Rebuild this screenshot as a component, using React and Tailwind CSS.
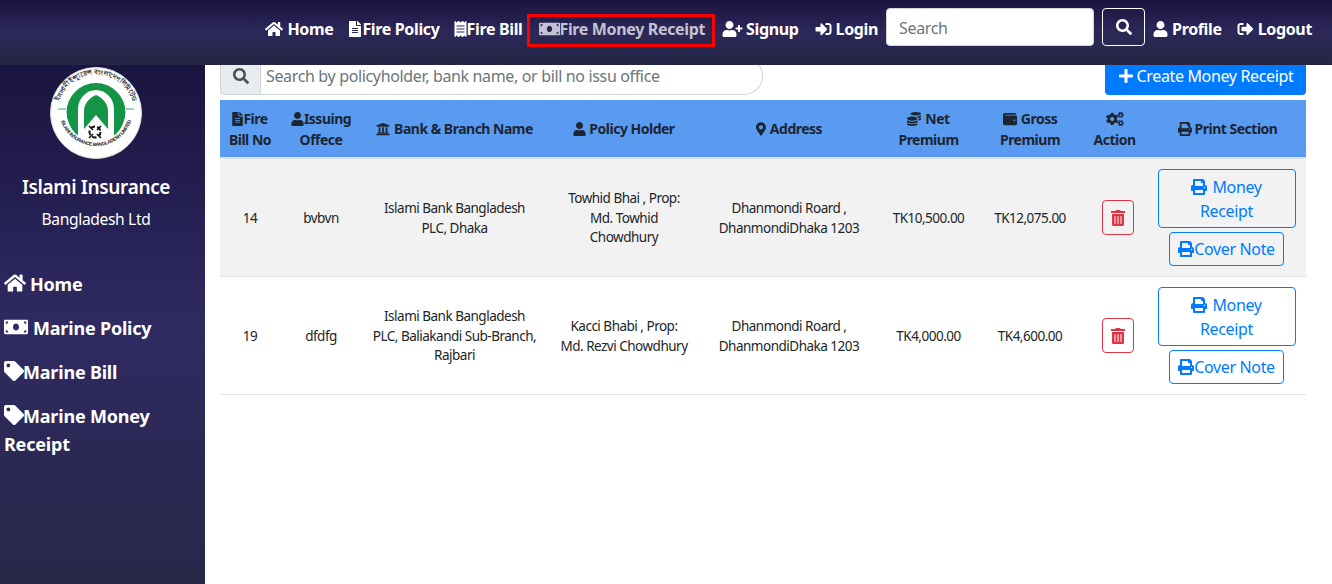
import React from "react";
import {
  FaHome, FaFileAlt, FaReceipt, FaMoneyBill, FaUserPlus, FaSignInAlt, FaSearch, FaUser,
  FaSignOutAlt, FaPlus, FaTag, FaUniversity, FaMapMarkerAlt, FaCoins, FaWallet, FaCogs,
  FaPrint, FaTrashAlt,
} from "react-icons/fa";

function Logo() {
  return (
    <svg viewBox="0 0 92 92" className="w-[92px] h-[92px]">
      <defs>
        <path id="topArc" d="M7.5 46 A38 38 0 0 1 84.5 46" />
        <path id="botArc" d="M9 42 A37 37 0 0 0 83 42" />
      </defs>
      <circle cx="46" cy="46" r="45.5" fill="#fff" stroke="#d8ddd6" strokeWidth="1" />
      <text fontSize="6.6" fill="#2b2b2b" fontFamily="'Noto Sans CJK SC', sans-serif" fontWeight="600">
        <textPath href="#topArc" startOffset="50%" textAnchor="middle">ইসলামী ইন্স্যুরেন্স বাংলাদেশ লিমিটেড</textPath>
      </text>
      <circle cx="46" cy="45.5" r="29.5" fill="#139447" />
      <path d="M28 72 L28 42 C28 32 36 23 46 23 C56 23 64 32 64 42 L64 72 Z" fill="#fff" />
      <path d="M34 62 L34 44 C34 37 39 31 46 28 C53 31 58 37 58 44 L58 62 L46 48 Z" fill="#139447" />
      <path d="M7 42 L16 42 C16 56 24 68 32 72 L60 72 C68 68 76 56 76 42 L85 42 L85 52 C80 72 64 84 46 84 C28 84 12 72 7 52 Z" fill="#fff" />
      <path d="M8 42 L16 42 M76 42 L84 42" stroke="#139447" strokeWidth="0.8" />
      <text fontSize="4.9" fontWeight="700" fill="#222" fontFamily="'Liberation Sans', sans-serif">
        <textPath href="#botArc" startOffset="50%" textAnchor="middle">ISLAMI INSURANCE BANGLADESH LIMITED</textPath>
      </text>
      <circle cx="45" cy="65" r="5.5" fill="none" stroke="#111" strokeWidth="2" strokeDasharray="4.5 2.4" />
      <path d="M39 59 L43 63 M51 59 L47 63 M39 71 L43 67 M51 71 L47 67" stroke="#111" strokeWidth="1.6" />
    </svg>
  );
}

function NavItem({ icon: Icon, children, iconClass, className = "" }) {
  return (
    <a className={"flex items-center h-[38px] mt-[2px] text-white font-bold text-base whitespace-nowrap " + className}>
      <Icon className={"h-4 shrink-0 " + iconClass} />
      {children}
    </a>
  );
}

function SideItem({ icon: Icon, children, iconClass }) {
  return (
    <a className="block px-[4px] py-[8px] text-white font-bold text-lg leading-[28px] tracking-[-0.2px]">
      <Icon className={"inline-block align-[-2px] " + iconClass} />
      {children}
    </a>
  );
}

function Th({ icon: Icon, children, rest, iconClass = "" }) {
  return (
    <th className="px-1 py-[7.5px] text-center align-middle font-bold text-sm leading-[21px] text-[#1c2530] tracking-[-0.5px]">
      <Icon className={"inline-block align-[-2px] " + iconClass} />
      {children}
      {rest && <br />}
      {rest}
    </th>
  );
}

const rows = [
  {
    no: "14",
    office: "bvbvn",
    bank: "Islami Bank Bangladesh PLC, Dhaka",
    holder: ["Towhid Bhai , Prop:", "Md. Towhid", "Chowdhury"],
    addr: "Dhanmondi Roard , DhanmondiDhaka 1203",
    net: "TK10,500.00",
    gross: "TK12,075.00",
    bg: "bg-[#f2f2f2]",
  },
  {
    no: "19",
    office: "dfdfg",
    bank: "Islami Bank Bangladesh PLC, Baliakandi Sub-Branch, Rajbari",
    holder: ["Kacci Bhabi , Prop:", "Md. Rezvi Chowdhury"],
    addr: "Dhanmondi Roard , DhanmondiDhaka 1203",
    net: "TK4,000.00",
    gross: "TK4,600.00",
    bg: "bg-white",
  },
];

export default function App() {
  return (
    <div className="h-[584px] overflow-hidden bg-white font-['Noto_Sans','Open_Sans',sans-serif] tracking-[-0.35px] flex flex-col text-[#212529]">
      <header className="relative z-10 h-[65px] shrink-0 bg-gradient-to-b from-[#1a1440] via-[#2c2858] to-[#252545] flex items-start justify-end pt-[8px] pr-[20px]">
        <NavItem icon={FaHome} iconClass="w-[18px]" className="mr-[16px]"><span className="ml-[4px]">Home</span></NavItem>
        <NavItem icon={FaFileAlt} iconClass="w-[12px]" className="mr-[14px]"><span className="ml-[1px]">Fire Policy</span></NavItem>
        <NavItem icon={FaReceipt} iconClass="w-[13px]" className="mr-[4px]">Fire Bill</NavItem>
        <a className="flex items-center h-[33px] mt-[6px] pb-[3px] pl-[9px] pr-[7px] mr-[7px] border-[3px] border-[#ff0000] text-[#c4c3d2] font-bold text-base whitespace-nowrap">
          <FaMoneyBill className="w-[21px] h-[18px] shrink-0" />
          Fire Money Receipt
        </a>
        <NavItem icon={FaUserPlus} iconClass="w-[21px]" className="mr-[16px]"><span className="ml-[3px]">Signup</span></NavItem>
        <NavItem icon={FaSignInAlt} iconClass="w-[17px]" className="mr-[8px]"><span className="ml-[4px]">Login</span></NavItem>
        <input
          placeholder="Search"
          className="w-[208px] h-[38px] mr-[8px] pt-[2px] rounded-[4px] bg-white border border-[#ced4da] px-3 text-base text-[#495057] placeholder:text-[#6c757d] outline-none"
        />
        <button className="w-[43px] h-[38px] mr-[8px] rounded-[4px] border border-white flex items-center justify-center text-white">
          <FaSearch className="w-4 h-4" />
        </button>
        <NavItem icon={FaUser} iconClass="w-[15px]" className="mr-[15px]"><span className="ml-[4px]">Profile</span></NavItem>
        <NavItem icon={FaSignOutAlt} iconClass="w-[17px]"><span className="ml-[4px]">Logout</span></NavItem>
      </header>

      <div className="flex flex-1 min-h-0">
        <aside className="w-[205px] shrink-0 bg-gradient-to-b from-[#1a1440] via-[#2f2a62] to-[#282648] text-white">
          <div className="pr-[13px]">
            <div className="flex justify-center pt-[2px]"><Logo /></div>
            <div className="mt-[15px] text-center text-[19px] font-semibold leading-[27px]">Islami Insurance</div>
            <div className="mt-[6px] text-center text-[15.6px] leading-[24px]">Bangladesh Ltd</div>
          </div>
          <nav className="mt-[31px]">
            <SideItem icon={FaHome} iconClass="w-[22px] h-5 mr-[4px]">Home</SideItem>
            <SideItem icon={FaMoneyBill} iconClass="w-[24px] h-5 mr-[5px]">Marine Policy</SideItem>
            <SideItem icon={FaTag} iconClass="w-5 h-5 -mr-px">Marine Bill</SideItem>
            <SideItem icon={FaTag} iconClass="w-5 h-5 -mr-px">Marine Money Receipt</SideItem>
          </nav>
        </aside>

        <main className="flex-1 min-w-0 pl-[15px] pr-[26px] -mt-[8px]">
          <div className="flex items-start justify-between h-[43px]">
            <div className="flex w-[543px] h-[38px]">
              <span className="w-[41px] flex items-center justify-center bg-[#e9ecef] border border-[#ced4da] rounded-l-[4px] text-[#495057]">
                <FaSearch className="w-4 h-4" />
              </span>
              <input
                placeholder="Search by policyholder, bank name, or bill no issu office"
                className="flex-1 min-w-0 border border-l-0 border-[#ced4da] rounded-r-[20px] px-[5px] text-base text-[#495057] placeholder:text-[#6c757d] outline-none"
              />
            </div>
            <button className="w-[201px] h-[38px] rounded-[4px] bg-[#007bff] text-white text-base flex items-center justify-center gap-[3px]">
              <FaPlus className="w-4 h-4" />
              Create Money Receipt
            </button>
          </div>

          <table className="w-[1086px] table-fixed border-collapse">
            <colgroup>
              <col className="w-[60px]" />
              <col className="w-[82px]" />
              <col className="w-[185px]" />
              <col className="w-[154px]" />
              <col className="w-[176px]" />
              <col className="w-[103px]" />
              <col className="w-[100px]" />
              <col className="w-[69px]" />
              <col className="w-[157px]" />
            </colgroup>
            <thead className="bg-[#5a9bf2] border-b-2 border-[#dee2e6]">
              <tr>
                <Th icon={FaFileAlt} iconClass="w-[11px] h-[14px]" rest="Bill No">Fire</Th>
                <Th icon={FaUser} iconClass="w-[13px] h-[14px]" rest="Offece">Issuing</Th>
                <Th icon={FaUniversity} iconClass="w-[14px] h-[14px] mr-[4px]">Bank &amp; Branch Name</Th>
                <Th icon={FaUser} iconClass="w-[13px] h-[14px] mr-[3px]">Policy Holder</Th>
                <Th icon={FaMapMarkerAlt} iconClass="w-[10px] h-[14px] mr-[4px]">Address</Th>
                <Th icon={FaCoins} iconClass="w-[14px] h-[14px] mr-[4px]" rest="Premium">Net</Th>
                <Th icon={FaWallet} iconClass="w-[14px] h-[14px] mr-[4px]" rest="Premium">Gross</Th>
                <Th icon={FaCogs} iconClass="w-[18px] h-[14px]" rest="Action"> </Th>
                <Th icon={FaPrint} iconClass="w-[14px] h-[14px] mr-[3px]">Print Section</Th>
              </tr>
            </thead>
            <tbody>
              {rows.map((r) => (
                <tr key={r.no} className={r.bg + " border-b border-[#dee2e6] text-[13.5px] tracking-[-0.5px] leading-[19.5px] text-center"}>
                  <td className="px-2 pt-[2px]">{r.no}</td>
                  <td className="px-2 pt-[2px]">{r.office}</td>
                  <td className="px-2 pt-[2px]">{r.bank}</td>
                  <td className="px-2 pt-[2px]">
                    {r.holder.map((line) => <div key={line}>{line}</div>)}
                  </td>
                  <td className="px-2 pt-[2px]">{r.addr}</td>
                  <td className="px-2 pt-[2px]">{r.net}</td>
                  <td className="px-2 pt-[2px]">{r.gross}</td>
                  <td className="pl-[22px] pr-[15px]">
                    <button className="w-[32px] h-[35px] inline-flex items-center justify-center rounded-[4px] border border-[#dc3545] text-[#dc3545]">
                      <FaTrashAlt className="w-[14px] h-4" />
                    </button>
                  </td>
                  <td className="pl-[8px] pr-[10px] pt-[10px] pb-[10px] tracking-[-0.35px]">
                    <button className="w-[138px] h-[59px] rounded-[4px] border border-[#007bff] text-[#007bff] text-base leading-[24px] block mx-auto">
                      <FaPrint className="inline-block align-[-2px] w-4 h-4 mr-[5px]" />
                      Money<br />Receipt
                    </button>
                    <button className="mt-[4px] w-[115px] h-[34px] rounded-[4px] border border-[#007bff] text-[#007bff] text-base inline-flex items-center justify-center">
                      <FaPrint className="w-4 h-4" />
                      Cover Note
                    </button>
                  </td>
                </tr>
              ))}
            </tbody>
          </table>
        </main>
      </div>
    </div>
  );
}
